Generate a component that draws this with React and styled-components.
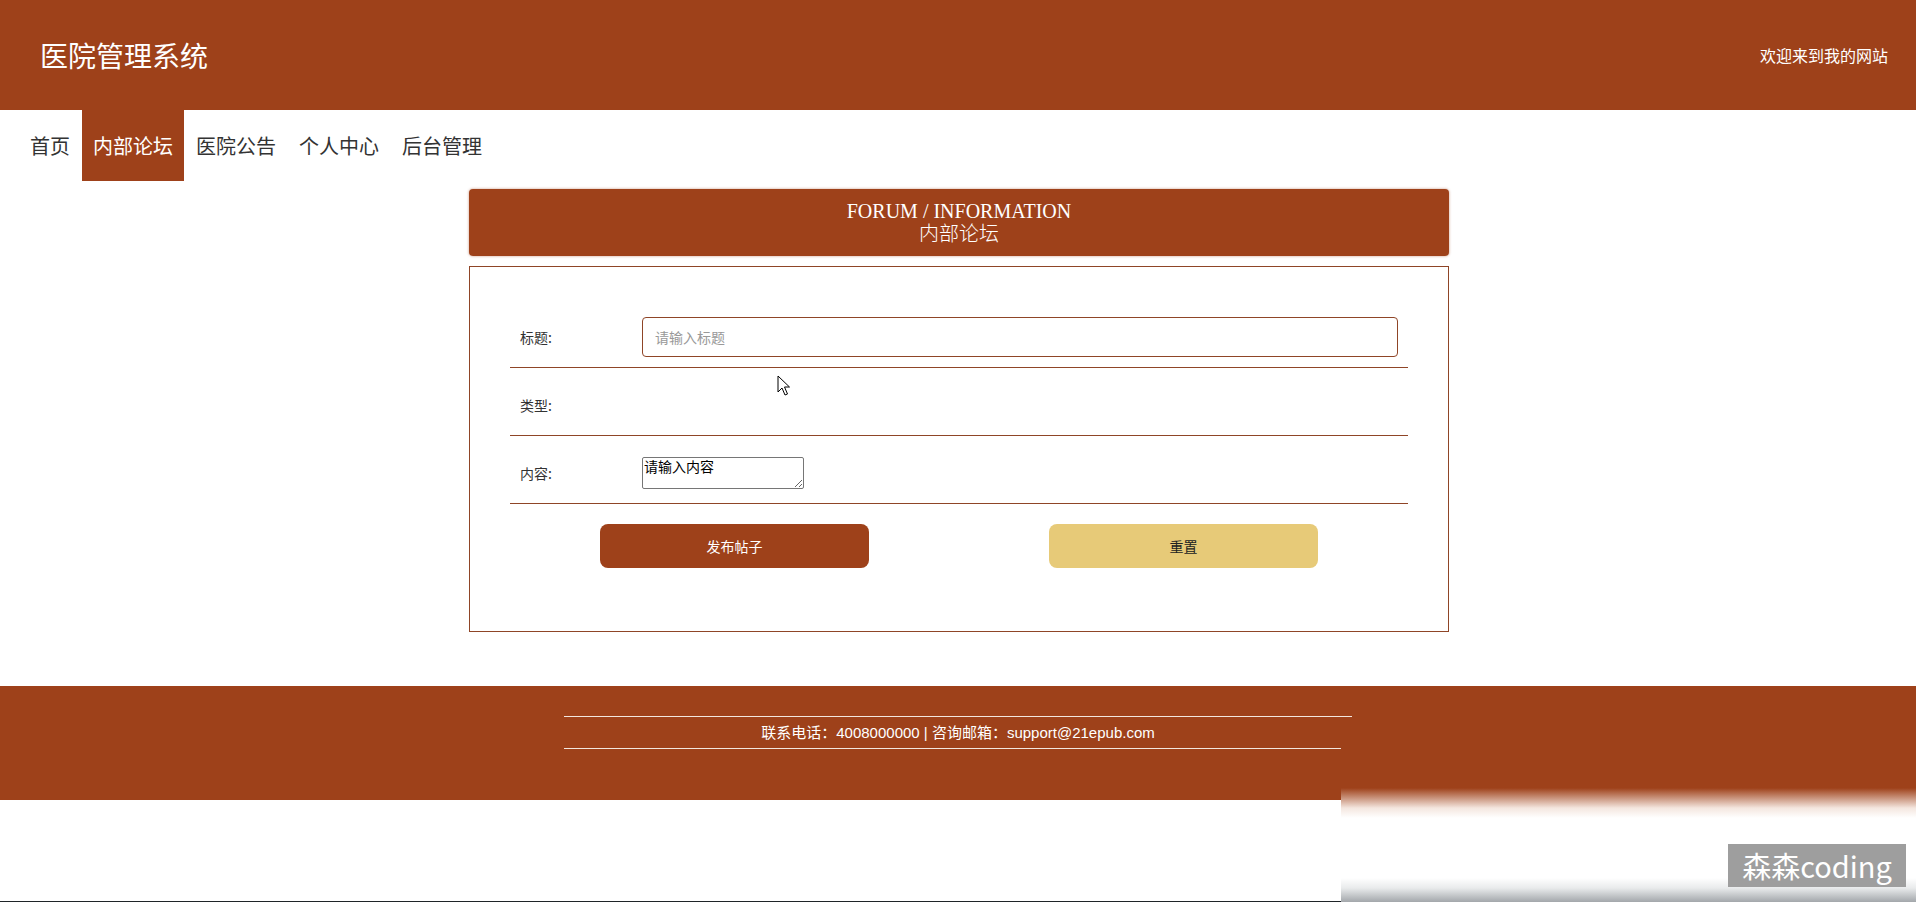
import React from "react";
import styled, { createGlobalStyle } from "styled-components";

const BROWN = "#9e411a";
const LINE = "#8f4527";
const CJK = `"Noto Sans CJK SC", "Noto Sans", sans-serif`;
const SANS = `"Liberation Sans", "Noto Sans CJK SC", sans-serif`;
const SERIF = `"Liberation Serif", "Noto Sans CJK SC", serif`;

const GlobalStyle = createGlobalStyle`
  html, body { margin: 0; padding: 0; background: #fff; }
  body { font-family: ${CJK}; color: #333; }
  * { box-sizing: border-box; }
`;

const Page = styled.div`
  position: relative;
  min-height: 902px;
  overflow: hidden;
`;

const Header = styled.header`
  height: 110px;
  background: ${BROWN};
  display: flex;
  align-items: center;
  justify-content: space-between;
  padding: 0 28px 0 40px;
  color: #fff;
`;

const SiteTitle = styled.h1`
  margin: 0;
  font-size: 28px;
  font-weight: 400;
  line-height: 34px;
  font-family: ${CJK};
`;

const Welcome = styled.span`
  font-size: 16px;
  line-height: 20px;
`;

const Nav = styled.nav`
  height: 71px;
  display: flex;
  gap: 1px;
  padding-left: 19px;
`;

const NavItem = styled.a`
  display: block;
  padding: 0 11px;
  font-size: 20px;
  line-height: 71px;
  color: ${(p) => (p.$active ? "#fff" : "#333")};
  background: ${(p) => (p.$active ? BROWN : "transparent")};
  text-decoration: none;
  cursor: pointer;
`;

const Main = styled.main`
  width: 980px;
  margin: 8px 0 0 calc(50% - 489px);
`;

const TitleBox = styled.div`
  height: 67px;
  background: ${BROWN};
  border-radius: 4px;
  box-shadow: 0 0 2px 1px rgba(158, 65, 26, 0.25);
  display: flex;
  flex-direction: column;
  align-items: center;
  justify-content: center;
  color: #fff;
  font-family: ${SERIF};
  font-size: 20px;
  line-height: 23px;
`;

const TitleLine = styled.div`
  font-weight: ${(p) => (p.$light ? 300 : 400)};
`;

const FormBox = styled.form`
  margin-top: 10px;
  border: 1px solid ${LINE};
  padding: 33px 40px 63px;
`;

const Row = styled.div`
  display: flex;
  align-items: center;
  min-height: 68px;
  padding: 17px 0 10px;
  border-bottom: 1px solid ${LINE};
`;

const Label = styled.label`
  width: 132px;
  flex: none;
  padding-left: 10px;
  font-size: 14px;
  line-height: 20px;
  color: #333;
`;

const Field = styled.div`
  min-height: 40px;
  display: flex;
  align-items: center;
`;

const TextInput = styled.input`
  width: 756px;
  height: 40px;
  border: 1px solid ${LINE};
  border-radius: 4px;
  padding: 0 12px;
  font-family: ${CJK};
  font-size: 14px;
  color: #333;
  outline: none;
  &::placeholder { color: #999; }
`;

const TextArea = styled.textarea`
  width: 162px;
  height: 32px;
  padding: 0 1px;
  border: 1px solid #767676;
  border-radius: 2px;
  font-family: ${CJK};
  font-size: 14px;
  line-height: 16px;
  color: #000;
  resize: both;
`;

const ButtonRow = styled.div`
  display: grid;
  grid-template-columns: 1fr 1fr;
  margin-top: 20px;
  justify-items: center;
`;

const Button = styled.button`
  width: 60%;
  height: 44px;
  border: none;
  border-radius: 8px;
  font-family: ${CJK};
  font-size: 14px;
  cursor: pointer;
  background: ${(p) => (p.$variant === "reset" ? "#e7ca78" : BROWN)};
  color: ${(p) => (p.$variant === "reset" ? "#222" : "#fff")};
`;

const Footer = styled.footer`
  margin-top: 54px;
  height: 114px;
  background: ${BROWN};
  padding-top: 30px;
`;

const FooterInfo = styled.div`
  width: 788px;
  margin: 0 auto;
  border-top: 1px solid #f3e6de;
  border-bottom: 1px solid #f3e6de;
  text-align: center;
  color: #fff;
  font-family: ${SANS};
  font-size: 15px;
  line-height: 31px;
`;

const BottomEdge = styled.div`
  position: absolute;
  left: 0;
  right: 0;
  bottom: 0;
  height: 1px;
  background: #1f2428;
`;

const WatermarkFade = styled.div`
  position: absolute;
  left: 1341px;
  top: 742px;
  right: 0;
  bottom: 0;
  background: linear-gradient(
    to bottom,
    ${BROWN} 0px,
    ${BROWN} 46px,
    #f4e6df 66px,
    #ffffff 76px,
    #ffffff 136px,
    #e9ebec 146px,
    #a3a7ab 160px
  );
`;

const Badge = styled.div`
  position: absolute;
  left: 1728px;
  top: 844px;
  width: 178px;
  height: 43px;
  background: #9e9e9e;
  color: #fff;
  font-family: ${CJK};
  font-size: 29px;
  line-height: 43px;
  text-align: center;
  white-space: nowrap;
`;

const Cursor = styled.svg`
  position: absolute;
  left: 777px;
  top: 375px;
  width: 13px;
  height: 21px;
  pointer-events: none;
`;

export default function App() {
  return (
    <Page>
      <GlobalStyle />
      <Header>
        <SiteTitle>医院管理系统</SiteTitle>
        <Welcome>欢迎来到我的网站</Welcome>
      </Header>
      <Nav>
        <NavItem>首页</NavItem>
        <NavItem $active>内部论坛</NavItem>
        <NavItem>医院公告</NavItem>
        <NavItem>个人中心</NavItem>
        <NavItem>后台管理</NavItem>
      </Nav>
      <Main>
        <TitleBox>
          <TitleLine>FORUM / INFORMATION</TitleLine>
          <TitleLine $light>内部论坛</TitleLine>
        </TitleBox>
        <FormBox onSubmit={(e) => e.preventDefault()}>
          <Row>
            <Label>标题:</Label>
            <Field>
              <TextInput placeholder="请输入标题" />
            </Field>
          </Row>
          <Row>
            <Label>类型:</Label>
            <Field />
          </Row>
          <Row>
            <Label>内容:</Label>
            <Field>
              <TextArea defaultValue="请输入内容" />
            </Field>
          </Row>
          <ButtonRow>
            <Button type="button">发布帖子</Button>
            <Button type="button" $variant="reset">重置</Button>
          </ButtonRow>
        </FormBox>
      </Main>
      <Footer>
        <FooterInfo>联系电话：4008000000 | 咨询邮箱：support@21epub.com</FooterInfo>
      </Footer>
      <BottomEdge />
      <WatermarkFade />
      <Badge>森森coding</Badge>
      <Cursor viewBox="0 0 13 21">
        <path
          d="M1 1 L1 17 L5 13 L8 20 L10.5 19 L7.5 12 L12.5 12 Z"
          fill="#fff"
          stroke="#000"
          strokeWidth="1"
          strokeLinejoin="round"
        />
      </Cursor>
    </Page>
  );
}
